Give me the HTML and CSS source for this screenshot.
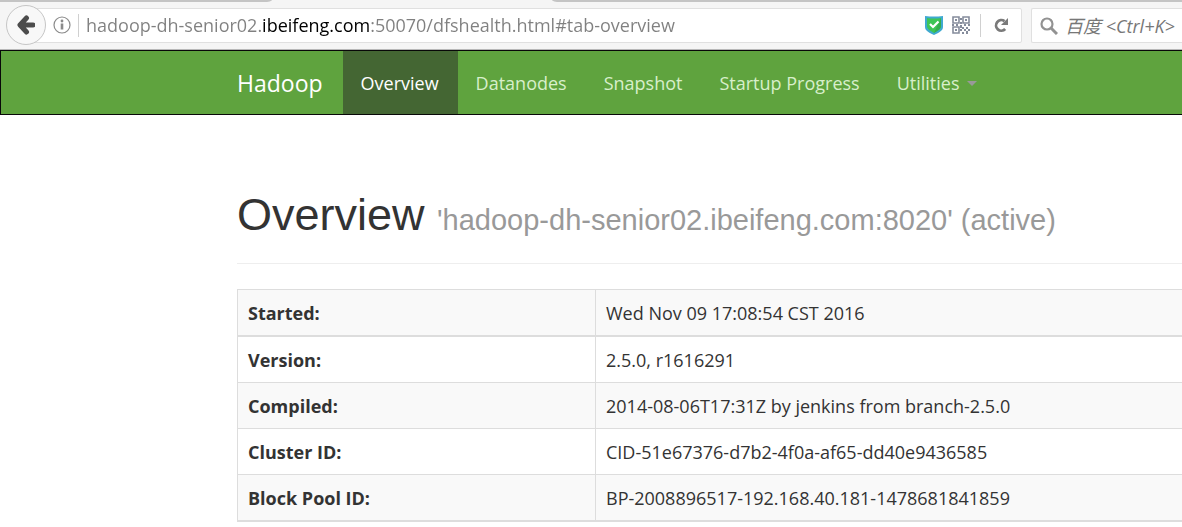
FILE: index.html
```html
<!DOCTYPE html>
<html lang="en">
<head>
<meta charset="utf-8">
<title>Namenode information</title>
<link rel="stylesheet" href="styles.css">
</head>
<body>
<div class="browser">
  <div class="tabstrip"><span class="tab tab-left"></span><span class="tab tab-right"></span></div>
  <div class="toolbar">
    <div class="urlbar">
      <button class="back" type="button" aria-label="Back">
        <svg width="18" height="20" viewBox="0 0 18 20"><path d="M9.500 3L3 10l6.500 7M4 10h12" fill="none" stroke="#4c4c4c" stroke-width="5" stroke-linecap="round" stroke-linejoin="round"/></svg>
      </button>
      <button class="icon" type="button" aria-label="Site information">
        <svg width="18" height="18" viewBox="0 0 18 18"><circle cx="9" cy="9" r="8" fill="none" stroke="#8a8a8a" stroke-width="1.200"/><circle cx="9" cy="5" r="1.400" fill="#8a8a8a"/><path d="M9 7.500v6" stroke="#8a8a8a" stroke-width="2.600"/></svg>
      </button>
      <span class="divider"></span>
      <input class="url" type="text" aria-label="Address" value="hadoop-dh-senior02.ibeifeng.com:50070/dfshealth.html#tab-overview">
      <span class="badges">
        <svg width="18" height="20" viewBox="0 0 18 20"><path d="M0 1q9 1 18 0v11c0 4-5 6-9 8-4-2-9-4-9-8z" fill="#3fa9d0"/><path d="M2 3q7 1 14 0v8c0 3.500-4 5-7 7-3-2-7-3.500-7-7z" fill="#3ec556"/><path d="M16 3v8c0 3.500-4 5-7 7z" fill="#35ad4e"/><path d="M5 9l3 3 5.500-5.500" fill="none" stroke="#fff" stroke-width="2.200"/></svg>
        <svg width="18" height="18" viewBox="0 0 18 18"><g fill="none" stroke="#858c9c" stroke-width="1.600"><path d="M1 1h6v6H1zM11 1h6v6h-6zM1 11h6v6H1z"/></g><path fill="#858c9c" d="M3 3h2v2H3zM13 3h2v2h-2zM3 13h2v2H3zM8 2h2v2H8zM8 6h2v2H8zM0 8h2v2H0zM4 8h2v2H4zM8 9h2v3H8zM12 8h2v2h-2zM16 8h2v2h-2zM10 11h2v2h-2zM14 11h2v2h-2zM8 13h2v2H8zM12 13h2v2h-2zM16 13h2v2h-2zM10 16h2v2h-2zM14 15h2v3h-2z"/></svg>
      </span>
      <span class="divider"></span>
      <button class="icon reload" type="button" aria-label="Reload">
        <svg width="16" height="16" viewBox="0 0 16 16"><path d="M11.500 4.100A5.300 5.300 0 1 0 12.200 12" fill="none" stroke="#7a7a7a" stroke-width="2.800"/><path d="M15 1v7H8z" fill="#7a7a7a"/></svg>
      </button>
    </div>
    <label class="search">
      <svg width="18" height="18" viewBox="0 0 18 18" fill="none" stroke="#929292"><circle cx="7" cy="7" r="5.500" stroke-width="2.200"/><path d="M11 11l6 6" stroke-width="3"/></svg>
      <input type="text" aria-label="Search" placeholder="百度 &lt;Ctrl+K&gt;">
    </label>
  </div>
</div>
<nav class="navbar">
  <a class="brand" href="#">Hadoop</a>
  <a class="active" href="#tab-overview">Overview</a>
  <a href="#tab-datanode">Datanodes</a>
  <a href="#tab-snapshot">Snapshot</a>
  <a href="#tab-startup-progress">Startup Progress</a>
  <a href="#utilities">Utilities <span class="caret"></span></a>
</nav>
<main>
  <h1>Overview <small>'hadoop-dh-senior02.ibeifeng.com:8020' (active)</small></h1>
  <table>
    <tbody>
      <tr><th scope="row">Started:</th><td>Wed Nov 09 17:08:54 CST 2016</td></tr>
      <tr><th scope="row">Version:</th><td>2.5.0, r1616291</td></tr>
      <tr><th scope="row">Compiled:</th><td>2014-08-06T17:31Z by jenkins from branch-2.5.0</td></tr>
      <tr><th scope="row">Cluster ID:</th><td>CID-51e67376-d7b2-4f0a-af65-dd40e9436585</td></tr>
      <tr><th scope="row">Block Pool ID:</th><td>BP-2008896517-192.168.40.181-1478681841859</td></tr>
    </tbody>
  </table>
</main>
</body>
</html>
```
FILE: styles.css
```css
* { box-sizing: border-box; }

body {
  margin: 0;
  overflow-x: hidden;
  background: #fff;
  color: #333;
  font: 18px/25px "Open Sans", "Noto Sans CJK SC", sans-serif;
}

button, input {
  margin: 0;
  padding: 0;
  border: 0;
  background: none;
  font: inherit;
  outline: 0;
}

svg { display: block; flex: none; }

/* Browser chrome */
.browser {
  background: #f5f5f5;
  border-bottom: 1px solid #b8b8b8;
}

.tabstrip {
  display: flex;
  justify-content: space-between;
  gap: 280px;
  height: 2px;
}

.tab { background: #c4c4c4; }
.tab-left { flex: 0 0 272px; border-bottom-right-radius: 8px 2px; }
.tab-right { flex: 1; border-bottom-left-radius: 8px 2px; }

.toolbar {
  display: flex;
  gap: 9px;
  padding: 3px 0 4px 6px;
}

.urlbar {
  position: relative;
  display: flex;
  flex: 1;
  align-items: center;
  gap: 7px;
  min-width: 0;
  height: 40px;
  padding-right: 13px;
  background: linear-gradient(#fff, #fff) 20px 4px / 100% 33px no-repeat;
}

.urlbar::before {
  content: "";
  position: absolute;
  inset: 3px 0 2px 20px;
  border: 1px solid #e0e0e0;
  border-radius: 2px;
  pointer-events: none;
}

.back {
  display: flex;
  flex: none;
  align-items: center;
  justify-content: center;
  width: 40px;
  height: 40px;
  border: 1px solid #c6c6c6;
  border-radius: 50%;
  background: #f8f8f8;
  z-index: 1;
}

.icon { flex: none; }

.divider {
  flex: none;
  width: 1px;
  height: 23px;
  background: #d0d0d0;
}

.url {
  flex: 1;
  min-width: 0;
  height: 30px;
  background: linear-gradient(90deg, #808080 175px, #000 175px, #000 283px, #808080 283px);
  -webkit-background-clip: text;
  background-clip: text;
  -webkit-text-fill-color: transparent;
}

.badges {
  display: flex;
  align-items: center;
  gap: 9px;
  padding-right: 3px;
}

.reload { padding-left: 5px; }

.search {
  display: flex;
  flex: 0 0 151px;
  align-items: center;
  gap: 7px;
  height: 35px;
  margin-top: 3px;
  padding-left: 8px;
  overflow: hidden;
  background: #fff;
  border: 1px solid #e0e0e0;
  border-right: 0;
  border-radius: 2px 0 0 2px;
}

.search input { flex: 1; min-width: 0; height: 30px; }
.search input::placeholder { color: #777; font-style: italic; opacity: 1; }

/* Site navigation */
.navbar {
  display: flex;
  padding-left: 218px;
  background: #5fa33e;
  border: 1px solid #080808;
  border-right: 0;
}

.navbar a {
  display: flex;
  align-items: center;
  gap: 8px;
  padding: 20px 19px 18px 18px;
  color: #d8efcb;
  text-decoration: none;
}

.navbar .brand { padding-right: 20px; color: #fff; font-size: 23px; }
.navbar .active { color: #fff; background: #446633; }

.caret {
  border: 5px solid transparent;
  border-top-color: #999;
  border-bottom: 0;
}

/* Overview */
main { padding: 75px 0 5px 237px; }

h1 {
  margin: 0 0 25px;
  padding-bottom: 23px;
  border-bottom: 1px solid #eee;
  font: 45px/50px "Liberation Sans", Arial, sans-serif;
  white-space: nowrap;
}

h1 small { color: #999; font-size: 29px; line-height: 1; }

table {
  width: 100%;
  border-spacing: 0;
  border-top: 1px solid #ddd;
  table-layout: fixed;
}

th, td {
  padding: 11px 10px 9px;
  border-left: 1px solid #ddd;
  border-bottom: 1px solid #ddd;
  text-align: left;
}

th { width: 358px; }
tr:nth-child(odd) { background: #f9f9f9; }
tr:first-child > *, tr:last-child > * { border-bottom-width: 2px; }
```
